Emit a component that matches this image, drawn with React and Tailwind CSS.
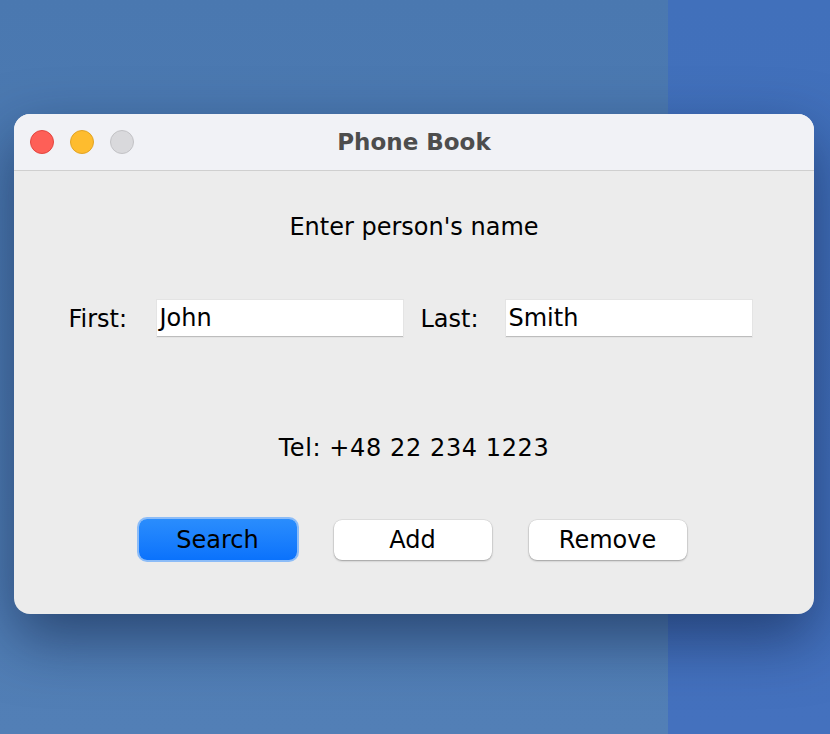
import React from "react";

const font = { fontFamily: '"DejaVu Sans", "Liberation Sans", sans-serif' };

function TrafficLights() {
  return (
    <div className="flex items-center gap-[16px] pl-[16px]">
      <span className="w-[24px] h-[24px] rounded-full bg-[#fe5f57] border border-[#e2463f]" />
      <span className="w-[24px] h-[24px] rounded-full bg-[#febc2e] border border-[#e1a325]" />
      <span className="w-[24px] h-[24px] rounded-full bg-[#d9d9dc] border border-[#c2c2c5]" />
    </div>
  );
}

function Field({ label, value, labelWidth }) {
  return (
    <div className="flex items-center">
      <span className={`text-[24px] text-black ${labelWidth}`}>{label}</span>
      <div className="w-[246px] h-[37px] bg-white border-b border-[#bdbdbd] shadow-[0_0_0_1px_#e4e4e4] flex items-center px-[3px] text-[24px] text-black">
        {value}
      </div>
    </div>
  );
}

export default function App() {
  return (
    <div className="relative w-[830px] h-[734px] overflow-hidden flex" style={font}>
      {/* desktop */}
      <div className="w-[668px] h-full bg-gradient-to-b from-[#4a78b0] to-[#527fb6]" />
      <div className="flex-1 h-full bg-gradient-to-b from-[#4170bb] to-[#4471be]" />

      {/* window */}
      <div className="absolute left-[14px] top-[114px] w-[800px] h-[500px] rounded-[16px] overflow-hidden bg-[#ececec] shadow-[0_24px_60px_rgba(10,25,60,0.55)] flex flex-col">
        <div className="relative h-[57px] bg-[#f1f2f6] border-b border-[#cfcfcf] flex items-center">
          <TrafficLights />
          <div className="absolute inset-0 flex items-center justify-center text-[23px] font-bold text-[#4d4d4d]">
            Phone Book
          </div>
        </div>

        <div className="flex-1 flex flex-col items-center pt-[42px]">
          <div className="h-[28px] leading-[28px] text-[24px] text-black">Enter person's name</div>

          <div className="mt-[59px] flex items-center gap-[18px] pr-[8px]">
            <Field label="First:" value="John" labelWidth="w-[88px]" />
            <Field label="Last:" value="Smith" labelWidth="w-[85px]" />
          </div>

          <div className="mt-[97px] h-[28px] leading-[28px] text-[24px] tracking-[0.6px] text-black">Tel: +48 22 234 1223</div>

          <div className="mt-[57px] flex items-center gap-[37px] pr-[3px]">
            <button className="w-[158px] h-[41px] rounded-[8px] bg-gradient-to-b from-[#2a8dfd] to-[#0a72fc] ring-2 ring-[#8cbcf7] text-[24px] text-black">
              Search
            </button>
            <button className="w-[158px] h-[40px] rounded-[8px] bg-white shadow-[0_1px_2px_rgba(0,0,0,0.3),0_0_0_0.5px_rgba(0,0,0,0.1)] text-[24px] text-black">
              Add
            </button>
            <button className="w-[158px] h-[40px] rounded-[8px] bg-white shadow-[0_1px_2px_rgba(0,0,0,0.3),0_0_0_0.5px_rgba(0,0,0,0.1)] text-[24px] text-black">
              Remove
            </button>
          </div>
        </div>
      </div>
    </div>
  );
}
